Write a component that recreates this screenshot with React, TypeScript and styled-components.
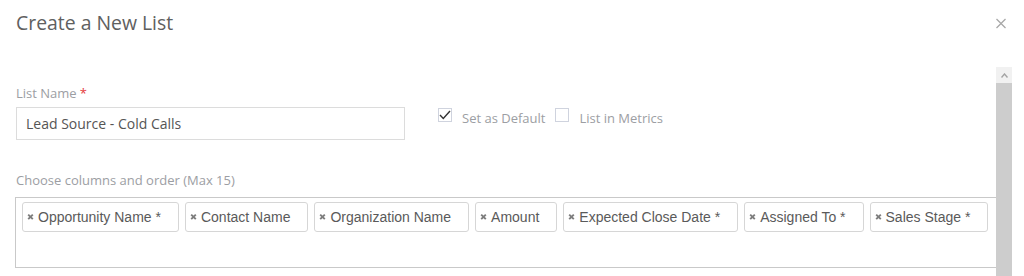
import React from "react";
import styled, { createGlobalStyle } from "styled-components";

const GlobalStyle = createGlobalStyle`
  html, body { margin: 0; padding: 0; background: #fff; }
  body { width: 1024px; height: 276px; overflow: hidden; font-family: "Open Sans", "Liberation Sans", sans-serif; }
  * { box-sizing: border-box; }
`;

const Modal = styled.div`
  width: 1024px;
  height: 276px;
  display: flex;
  flex-direction: column;
  background: #fff;
`;

const Header = styled.div`
  height: 67px;
  flex: none;
  display: flex;
  justify-content: space-between;
  align-items: flex-start;
  padding: 11px 18px 0 16px;
`;

const Title = styled.h4`
  margin: 0;
  font-family: "Open Sans", sans-serif;
  font-weight: 400;
  font-size: 19.4px;
  line-height: 24px;
  color: #606060;
`;

const CloseButton = styled.button`
  border: 0;
  background: transparent;
  padding: 0;
  margin-top: 7px;
  width: 10px;
  height: 11px;
  display: flex;
  cursor: pointer;
`;

const Body = styled.div`
  flex: 1;
  display: flex;
  min-height: 0;
  padding-right: 12px;
`;

const Content = styled.div`
  flex: 1;
  min-width: 0;
  padding: 17px 0 0 16px;
  display: flex;
  flex-direction: column;
`;

const Scrollbar = styled.div`
  width: 16px;
  flex: none;
  display: flex;
  flex-direction: column;
`;

const ScrollArrow = styled.div`
  height: 16px;
  background: #f1f1f1;
  display: flex;
  align-items: center;
  justify-content: center;
`;

const ScrollThumb = styled.div`
  flex: 1;
  background: #cdcdcd;
`;

const FieldRow = styled.div`
  display: flex;
  align-items: flex-end;
`;

const Field = styled.div`
  width: 389px;
  display: flex;
  flex-direction: column;
`;

const Label = styled.label<{ $gap?: number }>`
  font-size: 13px;
  line-height: 18px;
  color: #9c9ea3;
  margin-bottom: ${(p) => p.$gap ?? 5}px;
`;

const Required = styled.span`
  color: #e4393c;
  margin-left: 3px;
`;

const TextInput = styled.input`
  height: 33px;
  width: 100%;
  border: 1px solid #dcdcdc;
  padding: 0 9px;
  font-family: "Open Sans", sans-serif;
  font-size: 14px;
  color: #555;
  outline: none;
`;

const Checks = styled.div`
  display: flex;
  align-items: flex-start;
  margin-left: 33px;
  height: 33px;
  padding-top: 1px;
`;

const CheckItem = styled.label`
  display: flex;
  align-items: flex-start;
  gap: 10px;
  margin-right: 10px;
  font-size: 13px;
  line-height: 20px;
  color: #9c9ea3;
`;

const Box = styled.span`
  width: 14px;
  height: 14px;
  border: 1px solid #cfd3de;
  background: #fff;
  display: flex;
  align-items: center;
  justify-content: center;
`;

const ColumnsLabelWrap = styled.div`
  margin-top: 31px;
  display: flex;
  flex-direction: column;
`;

const ColumnsBox = styled.div`
  margin-left: -1px;
  margin-right: -1px;
  height: 71px;
  border: 1px solid #c9c9c9;
  padding: 4px 6px;
  display: flex;
  align-items: flex-start;
  gap: 6px;
`;

const Chip = styled.div`
  height: 30px;
  display: flex;
  align-items: center;
  border: 1px solid #d6d6d6;
  border-radius: 3px;
  padding: 0 17px 0 4px;
  font-family: "Liberation Sans", Arial, sans-serif;
  font-size: 14px;
  color: #5a5a5a;
  white-space: nowrap;
`;

const ChipRemove = styled.span`
  display: flex;
  margin-right: 3px;
`;

const columns = [
  "Opportunity Name *",
  "Contact Name",
  "Organization Name",
  "Amount",
  "Expected Close Date *",
  "Assigned To *",
  "Sales Stage *",
];

export default function App() {
  return (
    <>
      <GlobalStyle />
      <Modal>
        <Header>
          <Title>Create a New List</Title>
          <CloseButton aria-label="Close">
            <svg width="10" height="11" viewBox="0 0 10 11">
              <path d="M0.5 1 L9.5 10 M9.5 1 L0.5 10" stroke="#a8a8a8" strokeWidth="1.3" fill="none" />
            </svg>
          </CloseButton>
        </Header>
        <Body>
          <Content>
            <FieldRow>
              <Field>
                <Label>
                  List Name<Required>*</Required>
                </Label>
                <TextInput defaultValue="Lead Source - Cold Calls" />
              </Field>
              <Checks>
                <CheckItem>
                  <Box>
                    <svg width="12" height="10" viewBox="0 0 12 10">
                      <path d="M1 5 L4.3 8.5 L11 1" stroke="#333" strokeWidth="1.4" fill="none" />
                    </svg>
                  </Box>
                  Set as Default
                </CheckItem>
                <CheckItem>
                  <Box />
                  List in Metrics
                </CheckItem>
              </Checks>
            </FieldRow>
            <ColumnsLabelWrap>
              <Label $gap={8}>Choose columns and order (Max 15)</Label>
              <ColumnsBox>
                {columns.map((c) => (
                  <Chip key={c}>
                    <ChipRemove>
                      <svg width="8" height="8" viewBox="0 0 8 8">
                        <path d="M1.2 1.6 L5.8 6.2 M5.8 1.6 L1.2 6.2" stroke="#7d7d7d" strokeWidth="1.9" fill="none" />
                      </svg>
                    </ChipRemove>
                    {c}
                  </Chip>
                ))}
              </ColumnsBox>
            </ColumnsLabelWrap>
          </Content>
          <Scrollbar>
            <ScrollArrow>
              <svg width="7" height="5" viewBox="0 0 7 5">
                <path d="M0.5 4.5 L3.5 1 L6.5 4.5" stroke="#a3a3a3" strokeWidth="1.4" fill="none" />
              </svg>
            </ScrollArrow>
            <ScrollThumb />
          </Scrollbar>
        </Body>
      </Modal>
    </>
  );
}
